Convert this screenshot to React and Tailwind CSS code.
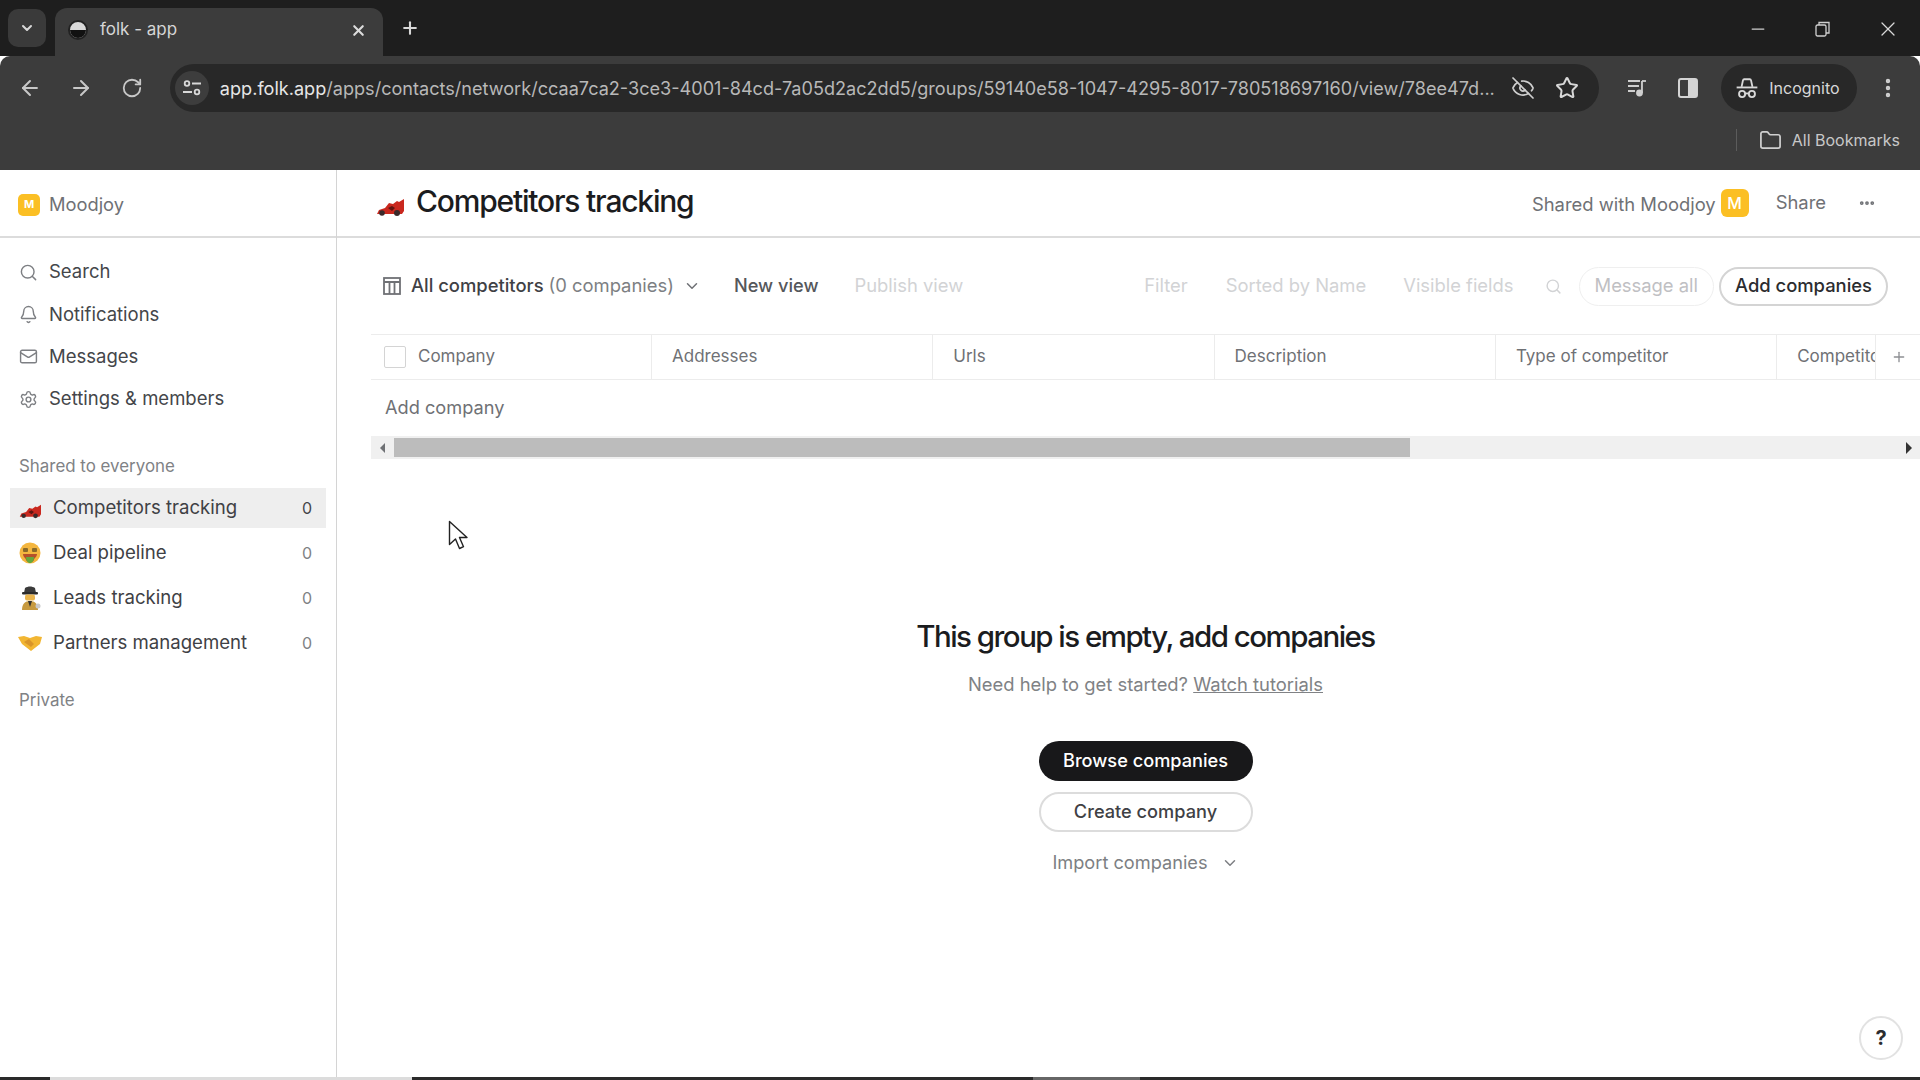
import React from 'react';
import {
  ArrowLeft, ArrowRight, RotateCw, ChevronDown, X, Plus, Minus, Star, EyeOff, MoreVertical,
  Folder, Search, Bell, Mail, Settings, MoreHorizontal,
} from 'lucide-react';

function CarEmoji({ size = 28 }) {
  return (
    <svg width={size} height={size} viewBox="0 0 28 28">
      <path d="M1 25l2-4 6-2 4-5 4 1 4-3 2 1 5-3v12l-2 3H3z" fill="#c9281e" />
      <path d="M12 19l4-2 3 2-3 3z" fill="#5e1410" />
      <circle cx="6" cy="24" r="2.8" fill="#3a2a2a" />
      <circle cx="21" cy="24" r="3" fill="#3a2a2a" />
    </svg>
  );
}

function MoneyFace() {
  return (
    <svg width="22" height="22" viewBox="0 0 22 22">
      <circle cx="11" cy="11" r="10.5" fill="#f4b63f" />
      <rect x="4" y="6" width="5" height="4" rx="1" fill="#8a6a2a" />
      <rect x="13" y="6" width="5" height="4" rx="1" fill="#8a6a2a" />
      <path d="M4 12h14c0 3-3 4-3 6-2 3-6 3-8 0 0-2-3-3-3-6z" fill="#b5502a" />
      <path d="M7 15h8c0 4-2 6-4 6s-4-2-4-6z" fill="#66a83c" />
    </svg>
  );
}

function Detective() {
  return (
    <svg width="22" height="24" viewBox="0 0 22 24">
      <path d="M6 2c3-2 7-2 10 0l1 5H5z" fill="#3a3a3a" />
      <rect x="3" y="6" width="16" height="2.5" rx="1" fill="#2b2b2b" />
      <rect x="6" y="8.5" width="10" height="6" rx="2" fill="#e9b44c" />
      <path d="M3 24c0-6 3-9 8-9s8 3 8 9z" fill="#c79a3f" />
      <path d="M9 15h4l-2 6z" fill="#333" />
      <circle cx="19" cy="20" r="2.5" fill="#c9c9c9" />
    </svg>
  );
}

function Handshake() {
  return (
    <svg width="24" height="18" viewBox="0 0 24 18">
      <path d="M0 3l6-1 6 2 6-2 6 1-2 7-9 7-9-7z" fill="#f2b632" />
      <path d="M6 8l5-3 5 5-3 3z" fill="#d9952a" />
    </svg>
  );
}

function IncognitoIcon() {
  return (
    <svg width="24" height="24" viewBox="0 0 22 22" fill="none" stroke="#d8d8d8" strokeWidth="1.7">
      <path d="M6 10l1.3-6q.3-1.2 1.5-1h4.4q1.2-.2 1.5 1L16 10" />
      <path d="M1.5 10.5h19" />
      <circle cx="6.5" cy="16.5" r="2.8" />
      <circle cx="15.5" cy="16.5" r="2.8" />
      <path d="M9.3 16h3.4" />
    </svg>
  );
}

function TabBar() {
  return (
    <div className="h-[56px] bg-[#1e1e1e] flex items-end pl-[8px] shrink-0">
      <div className="w-[38px] h-[38px] mb-[9px] rounded-[10px] bg-[#3a3a3a] flex items-center justify-center">
        <ChevronDown size={16} strokeWidth={3} color="#d8d8d8" />
      </div>
      <div className="ml-[9px] w-[328px] h-[48px] rounded-t-[12px] bg-[#3c3c3c] flex items-center pl-[13px] pr-[12px] pb-[4px]">
        <div className="w-[20px] h-[20px] rounded-full bg-[#d8d8d8] border-[2px] border-[#222] overflow-hidden flex items-end">
          <div className="w-full h-[8px] bg-[#111]" />
        </div>
        <span className="ml-[12px] text-[17px] text-[#d6d6d6]">folk - app</span>
        <X size={17} strokeWidth={3} color="#dcdcdc" className="ml-auto mr-[4px]" />
      </div>
      <Plus size={20} strokeWidth={2.5} color="#d8d8d8" className="ml-[17px] mb-[18px]" />
      <div className="ml-auto flex items-center mb-[15px]">
        <Minus size={20} color="#d0d0d0" strokeWidth={1.5} className="mr-[47px]" />
        <svg width="16" height="16" viewBox="0 0 16 16" fill="none" stroke="#d0d0d0" strokeWidth="1.3" className="mr-[45px]">
          <rect x="1" y="4" width="10" height="11" rx="1.5" />
          <path d="M4 4V1.5h10V12h-3" />
        </svg>
        <X size={24} color="#d8d8d8" strokeWidth={1.3} className="mr-[20px]" />
      </div>
    </div>
  );
}

function Toolbar() {
  return (
    <div className="h-[114px] bg-[#3c3c3c] shrink-0 rounded-tl-[10px] rounded-tr-[10px]">
      <div className="flex items-center h-[48px] mt-[8px] pl-[18px] pr-[20px]">
        <ArrowLeft size={24} color="#c8c8c8" strokeWidth={2} />
        <ArrowRight size={24} color="#c8c8c8" strokeWidth={2} className="ml-[27px]" />
        <RotateCw size={22} color="#c8c8c8" strokeWidth={2} className="ml-[28px]" />
        <div className="ml-[27px] w-[1432px] h-[48px] rounded-full bg-[#282828] flex items-center pl-[5px] pr-[20px]">
          <div className="w-[34px] h-[34px] rounded-full bg-[#3d3d3d] flex items-center justify-center">
            <svg width="20" height="18" viewBox="0 0 20 18" fill="none" stroke="#d8d8d8" strokeWidth="1.8">
              <circle cx="5" cy="4.5" r="2.3" />
              <path d="M10 4.5h9M1 13h9" />
              <circle cx="15" cy="13" r="2.3" />
            </svg>
          </div>
          <span className="ml-[11px] pt-[1px] text-[18.1px] text-[#b8b8b8] whitespace-nowrap">
            <span className="text-[#e6e6e6]">app.folk.app</span>/apps/contacts/network/ccaa7ca2-3ce3-4001-84cd-7a05d2ac2dd5/groups/59140e58-1047-4295-8017-780518697160/view/78ee47d...
          </span>
          <EyeOff size={24} color="#cfcfcf" strokeWidth={1.7} className="ml-auto" />
          <Star size={24} color="#d8d8d8" strokeWidth={2} className="ml-[20px]" />
        </div>
        <svg width="20" height="20" viewBox="0 0 20 20" fill="none" stroke="#cfcfcf" strokeWidth="1.8" className="ml-[28px]">
          <path d="M1 3h12M1 8h11M1 13h7M15 3v12" />
          <circle cx="12.5" cy="15" r="2.5" fill="#cfcfcf" />
          <path d="M15 3h4" />
        </svg>
        <svg width="20" height="20" viewBox="0 0 20 20" className="ml-[31px]">
          <rect x="1" y="1" width="18" height="18" rx="2" fill="none" stroke="#d4d4d4" strokeWidth="2" />
          <rect x="10" y="1" width="9" height="18" fill="#d4d4d4" />
        </svg>
        <div className="ml-[23px] w-[136px] h-[48px] rounded-full bg-[#282828] flex items-center pl-[14px]">
          <IncognitoIcon />
          <span className="ml-[10px] text-[16px] text-[#d8d8d8]">Incognito</span>
        </div>
        <MoreVertical size={24} color="#d0d0d0" strokeWidth={2.4} className="ml-[19px]" />
      </div>
      <div className="flex items-center justify-end h-[36px] mt-[10px] pr-[20px]">
        <div className="w-px h-[22px] bg-[#5c5c5c] mr-[22px]" />
        <Folder size={23} color="#cfcfcf" strokeWidth={1.8} />
        <span className="ml-[10px] text-[16px] text-[#c8c8c8]">All Bookmarks</span>
      </div>
    </div>
  );
}

const navItems = [
  { icon: Search, label: 'Search' },
  { icon: Bell, label: 'Notifications' },
  { icon: Mail, label: 'Messages' },
  { icon: Settings, label: 'Settings & members' },
];

const groups = [
  { icon: <CarEmoji size={22} />, label: 'Competitors tracking', active: true },
  { icon: <MoneyFace />, label: 'Deal pipeline' },
  { icon: <Detective />, label: 'Leads tracking' },
  { icon: <Handshake />, label: 'Partners management' },
];

function Sidebar() {
  return (
    <aside className="w-[337px] shrink-0 border-r border-[#d4d4d4] flex flex-col">
      <div className="h-[68px] border-b-2 border-[#dcdcdc] flex items-center pl-[18px] pt-[3px] shrink-0">
        <div className="w-[22px] h-[22px] rounded-[5px] bg-[#fbbf24] flex items-center justify-center text-white text-[11px] font-bold">M</div>
        <span className="ml-[9px] text-[18.3px] text-[#6f7175]">Moodjoy</span>
      </div>
      <div className="pt-[13px]">
        {navItems.map(({ icon: Icon, label }) => (
          <div key={label} className="h-[42.3px] flex items-center pl-[19px]">
            <Icon size={19} color="#7d7f83" strokeWidth={1.8} />
            <span className="ml-[11px] text-[18.5px] text-[#44464a]">{label}</span>
          </div>
        ))}
      </div>
      <div className="mt-[32px] pl-[19px] h-[28px] flex items-center text-[16.9px] text-[#808285]">Shared to everyone</div>
      <div className="mt-[8px] px-[10px]">
        {groups.map((g) => (
          <div
            key={g.label}
            className={`h-[40px] mb-[5px] flex items-center pl-[8px] pr-[14px] ${g.active ? 'bg-[#eeeeee]' : ''}`}
          >
            <div className="w-[24px] flex items-center justify-center">{g.icon}</div>
            <span className="ml-[11px] text-[18.6px] text-[#3f4145]">{g.label}</span>
            <span className={`ml-auto text-[16px] ${g.active ? 'text-[#44464a]' : 'text-[#808285]'}`}>0</span>
          </div>
        ))}
      </div>
      <div className="mt-[18px] pl-[19px] h-[28px] flex items-center text-[16.9px] text-[#808285]">Private</div>
    </aside>
  );
}

function Header() {
  return (
    <div className="h-[68px] border-b-2 border-[#dcdcdc] flex items-center pl-[39px] pr-[44px] shrink-0">
      <CarEmoji />
      <h1 className="ml-[12px] -mt-[4px] text-[30px] font-medium tracking-[-0.04em] text-[#1b1c1e]">Competitors tracking</h1>
      <span className="ml-auto pt-[3px] text-[18.4px] text-[#6f7175]">Shared with Moodjoy</span>
      <div className="ml-[5px] w-[28px] h-[28px] rounded-[6px] bg-[#fbbf24] flex items-center justify-center text-white text-[16px] font-medium">M</div>
      <span className="ml-[27px] text-[18.4px] text-[#6f7175]">Share</span>
      <MoreHorizontal size={18} color="#6f7175" strokeWidth={3} className="ml-[32px]" />
    </div>
  );
}

function ViewBar() {
  return (
    <div className="h-[96px] flex items-center pl-[46px] pr-[32px] shrink-0 text-[18.4px]">
      <svg width="18" height="18" viewBox="0 0 18 18" fill="none" stroke="#6f7175" strokeWidth="1.8">
        <rect x="1" y="1" width="16" height="16" />
        <path d="M1 5h16M6.5 5v12M11.5 5v12" />
      </svg>
      <span className="ml-[10px] font-medium text-[#3f4145]">All competitors</span>
      <span className="ml-[5px] text-[#7d7f83]">(0 companies)</span>
      <ChevronDown size={18} color="#6f7175" className="ml-[9px]" />
      <span className="ml-[33px] text-[18.2px] font-medium text-[#55575b]">New view</span>
      <span className="ml-[36px] text-[#d2d3d5]">Publish view</span>
      <span className="ml-auto text-[#d2d3d5]">Filter</span>
      <span className="ml-[38px] text-[#d2d3d5]">Sorted by Name</span>
      <span className="ml-[37px] text-[#d2d3d5]">Visible fields</span>
      <Search size={17} color="#d2d3d5" strokeWidth={2} className="ml-[31px]" />
      <div className="ml-[17px] h-[39px] px-[15px] rounded-full border border-[#efefef] flex items-center text-[#bfc0c3]">Message all</div>
      <div className="ml-[5px] h-[39px] px-[14px] rounded-full border-2 border-[#d4d4d4] flex items-center font-medium text-[#2b2c2f]">Add companies</div>
    </div>
  );
}

const columns = ['Addresses', 'Urls', 'Description', 'Type of competitor'];

function CompanyTable() {
  return (
    <div className="ml-[34px] shrink-0">
      <div className="h-[46px] border-y border-[#ececec] flex items-stretch text-[17px] text-[#6f7175]">
        <div className="w-[280px] shrink-0 flex items-center pl-[13px]">
          <div className="w-[22px] h-[22px] border border-[#d4d4d4] rounded-[2px]" />
          <span className="ml-[12px]">Company</span>
        </div>
        {columns.map((c) => (
          <div key={c} className="w-[281.3px] shrink-0 border-l border-[#ececec] flex items-center pl-[20px]">{c}</div>
        ))}
        <div className="w-[100px] shrink-0 border-x border-[#ececec] flex items-center pl-[20px] overflow-hidden whitespace-nowrap">Competitor</div>
        <Plus size={16} color="#8d8f93" strokeWidth={2} className="ml-[15px] self-center" />
      </div>
      <div className="h-[56px] flex items-center pl-[14px] text-[18.2px] text-[#6f7175]">Add company</div>
      <div className="h-[23px] bg-[#f0f0f0] flex items-center">
        <div className="w-[23px] flex justify-center">
          <div className="w-0 h-0 border-y-[5px] border-y-transparent border-r-[5px] border-r-[#6f7175]" />
        </div>
        <div className="w-[1016px] h-[19px] bg-[#bcbcbc]" />
        <div className="ml-auto mr-[8px] w-0 h-0 border-y-[6px] border-y-transparent border-l-[6px] border-l-[#333]" />
      </div>
    </div>
  );
}

function EmptyState() {
  return (
    <div className="flex flex-col items-center pl-[34px] pt-[157px]">
      <h2 className="text-[29.5px] leading-[40px] font-medium tracking-[-0.052em] text-[#1b1c1e]">This group is empty, add companies</h2>
      <p className="mt-[16px] text-[18.4px] leading-[24px] text-[#808285]">
        Need help to get started? <span className="underline">Watch tutorials</span>
      </p>
      <button className="mt-[45px] w-[214px] h-[40px] rounded-full bg-[#18181a] text-white text-[18.2px] font-medium">Browse companies</button>
      <button className="mt-[11px] w-[214px] h-[40px] rounded-full border-2 border-[#dcdcdc] text-[#3f4145] text-[18.2px] font-medium">Create company</button>
      <div className="mt-[11px] flex items-center h-[40px] text-[18.2px] text-[#7d7f83]">
        Import companies
        <ChevronDown size={18} color="#7d7f83" className="ml-[13px]" />
      </div>
    </div>
  );
}

export default function App() {
  return (
    <div className="w-[1920px] h-[1080px] overflow-hidden flex flex-col bg-white font-['Inter',sans-serif]">
      <TabBar />
      <Toolbar />
      <div className="flex-1 flex min-h-0 relative">
        <Sidebar />
        <main className="flex-1 min-w-0 flex flex-col">
          <Header />
          <ViewBar />
          <CompanyTable />
          <EmptyState />
        </main>
        <div className="absolute right-[17px] bottom-[17px] w-[44px] h-[44px] rounded-full border-2 border-[#e2e2e2] bg-white flex items-center justify-center text-[20px] font-bold text-[#2b2c2f]">?</div>
        {/* mouse pointer */}
        <svg width="20" height="30" viewBox="0 0 20 30" className="absolute left-[448px] top-[350px]">
          <path d="M1.5 1.5v23l6-5.5 4 9.5 4-1.8-4-9.2h7.5z" fill="#fff" stroke="#222" strokeWidth="1.4" strokeLinejoin="round" />
        </svg>
      </div>
      <div className="h-[3px] shrink-0 bg-[#2a2a2a] flex">
        <div className="ml-[50px] w-[362px] bg-[#dcdcdc]" />
        <div className="ml-[621px] w-[107px] bg-[#666666]" />
      </div>
    </div>
  );
}
